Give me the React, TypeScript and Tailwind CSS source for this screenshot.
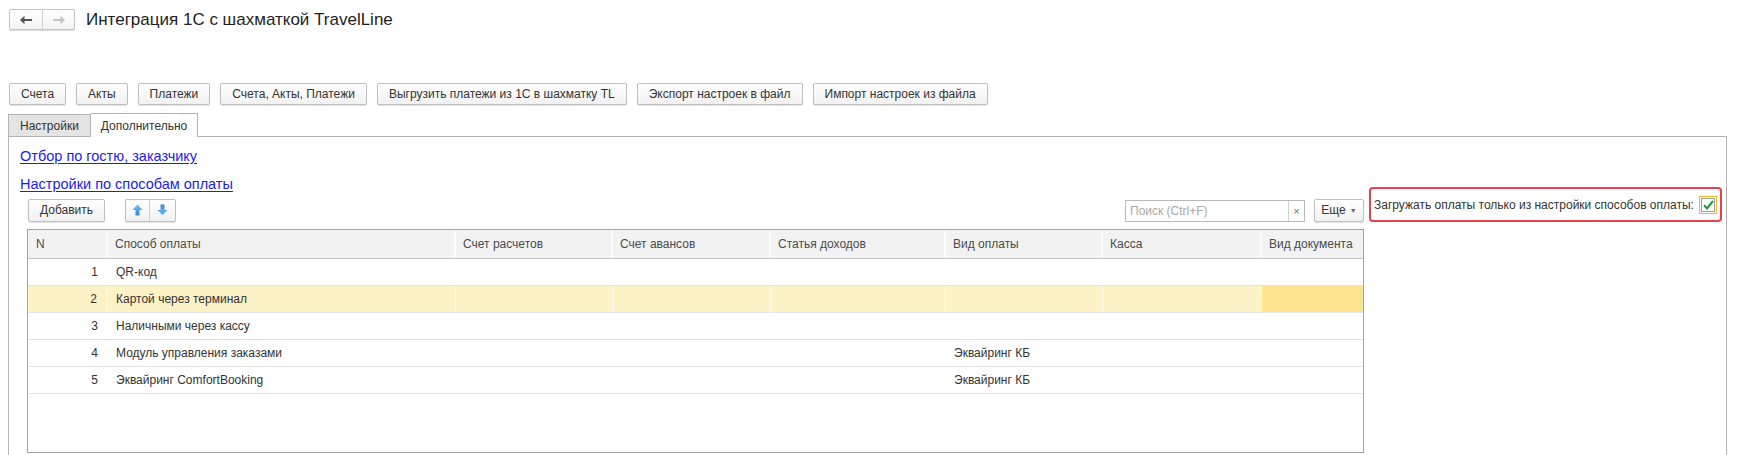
import type { ReactNode } from 'react';

const cols = [
  { title: 'N', w: 'w-[80px]' },
  { title: 'Способ оплаты', w: 'w-[348px]' },
  { title: 'Счет расчетов', w: 'w-[157px]' },
  { title: 'Счет авансов', w: 'w-[158px]' },
  { title: 'Статья доходов', w: 'w-[175px]' },
  { title: 'Вид оплаты', w: 'w-[157px]' },
  { title: 'Касса', w: 'w-[159px]' },
  { title: 'Вид документа', w: 'flex-1' },
];

const rows = [
  { n: 1, name: 'QR-код', vid: '' },
  { n: 2, name: 'Картой через терминал', vid: '' },
  { n: 3, name: 'Наличными через кассу', vid: '' },
  { n: 4, name: 'Модуль управления заказами', vid: 'Эквайринг КБ' },
  { n: 5, name: 'Эквайринг ComfortBooking', vid: 'Эквайринг КБ' },
];

function Btn({ children, className = '' }: { children: ReactNode; className?: string }) {
  return (
    <button
      className={`h-[22px] px-[11px] border border-[#bfbfbf] rounded-[2px] bg-linear-to-b from-white to-[#f1f1f1] text-[12px] leading-none text-[#333] shadow-[0_1px_1px_rgba(0,0,0,0.12)] whitespace-nowrap ${className}`}
    >
      {children}
    </button>
  );
}

function BlockArrow({ up }: { up?: boolean }) {
  return (
    <svg width="11" height="12" viewBox="0 0 11 12" className={up ? '' : 'rotate-180'}>
      <defs>
        <linearGradient id={up ? 'gu' : 'gd'} x1="0" y1="0" x2="0" y2="1">
          <stop offset="0" stopColor="#7cc0f0" />
          <stop offset="1" stopColor="#2f86d2" />
        </linearGradient>
      </defs>
      <polygon points="5.5,0.5 10.5,6 7.5,6 7.5,11.5 3.5,11.5 3.5,6 0.5,6" fill={`url(#${up ? 'gu' : 'gd'})`} />
    </svg>
  );
}

export default function App() {
  return (
    <div className="w-[1740px] h-[455px] overflow-hidden bg-white font-['Liberation_Sans',Arial,sans-serif] text-[#333]">
      {/* title bar */}
      <div className="flex items-center pt-[9px] pl-[9px]">
        <div className="flex h-[21px] border border-[#c6c6c6] rounded-[2px] bg-linear-to-b from-white to-[#f3f3f3] shadow-[0_1px_1px_rgba(0,0,0,0.15)]">
          <div className="w-[33px] flex items-center justify-center border-r border-[#d0d0d0]">
            <svg width="14" height="10" viewBox="0 0 14 10">
              <path d="M13 5H4" stroke="#555" strokeWidth="2" />
              <path d="M5.5 0.8L1 5l4.5 4.2" fill="#555" />
            </svg>
          </div>
          <div className="w-[31px] flex items-center justify-center">
            <svg width="14" height="10" viewBox="0 0 14 10">
              <path d="M1 5h9" stroke="#c4c4c4" strokeWidth="2" />
              <path d="M8.5 0.8L13 5l-4.5 4.2" fill="#c4c4c4" />
            </svg>
          </div>
        </div>
        <div className="ml-[11px] text-[17px] leading-[20px] text-[#1e1e1e]">Интеграция 1С с шахматкой TravelLine</div>
      </div>

      {/* command bar */}
      <div className="flex gap-[10px] pl-[9px] mt-[53px]">
        <Btn>Счета</Btn>
        <Btn>Акты</Btn>
        <Btn>Платежи</Btn>
        <Btn>Счета, Акты, Платежи</Btn>
        <Btn>Выгрузить платежи из 1С в шахматку TL</Btn>
        <Btn>Экспорт настроек в файл</Btn>
        <Btn>Импорт настроек из файла</Btn>
      </div>

      {/* tabs */}
      <div className="flex items-end pl-[8px] mt-[7px] h-[24px]">
        <div className="h-[22px] px-[11px] flex items-center bg-[#e4e4e4] border border-b-0 border-[#b4b4b4] text-[12px] text-[#333]">
          Настройки
        </div>
        <div className="h-[24px] px-[10px] flex items-center bg-white border border-l-0 border-b-0 border-[#b4b4b4] text-[12px] text-[#333] relative top-[1px]">
          Дополнительно
        </div>
      </div>

      {/* panel */}
      <div className="ml-[8px] mr-[13px] border border-[#b4b4b4] h-[330px] pl-[11px]">
        <div className="pt-[10px] text-[14.5px] leading-[18px] text-[#1c1cf0] underline underline-offset-2">
          Отбор по гостю, заказчику
        </div>

        <div className="flex">
          <div className="w-[1344px]">
            <div className="mt-[10px] text-[14.5px] leading-[18px] text-[#1c1cf0] underline underline-offset-2">
              Настройки по способам оплаты
            </div>

            <div className="mt-[5px] h-[24px] flex items-center pl-[8px]">
              <Btn className="h-[23px]">Добавить</Btn>
              <div className="ml-[20px] flex h-[23px] border border-[#bfbfbf] rounded-[2px] bg-linear-to-b from-white to-[#f1f1f1] shadow-[0_1px_1px_rgba(0,0,0,0.12)]">
                <div className="w-[24px] flex items-center justify-center border-r border-[#cfcfcf]">
                  <BlockArrow up />
                </div>
                <div className="w-[25px] flex items-center justify-center">
                  <BlockArrow />
                </div>
              </div>
              <div className="flex-1" />
              <div className="flex h-[22px] w-[180px] border border-[#b8b8b8] bg-white mt-[2px]">
                <div className="flex-1 flex items-center pl-[4px] text-[12px] text-[#a8a8a8]">Поиск (Ctrl+F)</div>
                <div className="w-[16px] border-l border-[#cfcfcf] flex items-center justify-center text-[11px] text-[#777]">×</div>
              </div>
              <Btn className="ml-[9px] h-[23px] w-[50px] px-0 flex items-center justify-center gap-[4px]">
                <span>Еще</span>
                <span className="text-[7px] text-[#666]">▼</span>
              </Btn>
            </div>

            {/* table */}
            <div className="mt-[7px] ml-[7px] w-[1337px] h-[224px] border border-[#a3a3a3] flex flex-col">
              <div className="flex h-[29px] bg-[#f2f2f2] border-b border-[#c4c4c4]">
                {cols.map((c, i) => (
                  <div
                    key={c.title}
                    className={`${c.w} flex items-center text-[12px] text-[#4a4a4a] ${i === 0 ? 'pl-[8px]' : 'pl-[7px]'} ${i < cols.length - 1 ? 'border-r-2 border-[#fbfbfb]' : ''}`}
                  >
                    {c.title}
                  </div>
                ))}
              </div>
              {rows.map((r) => {
                const sel = r.n === 2;
                return (
                  <div key={r.n} className={`flex h-[27px] border-b border-[#e4e4e4] ${sel ? 'bg-[#fdf1c6]' : ''}`}>
                    {cols.map((c, i) => {
                      let content: ReactNode = null;
                      if (i === 0) content = r.n;
                      if (i === 1) content = r.name;
                      if (i === 5) content = r.vid;
                      return (
                        <div
                          key={c.title}
                          className={`${c.w} flex items-center text-[12px] text-[#333] ${i === 0 ? 'justify-end pr-[10px]' : 'pl-[8px]'} ${sel && i < cols.length - 1 ? 'border-r border-[#fffaf0]' : ''} ${sel && i === cols.length - 1 ? 'bg-[#fde58f]' : ''}`}
                        >
                          {content}
                        </div>
                      );
                    })}
                  </div>
                );
              })}
            </div>
          </div>

          {/* option */}
          <div className="ml-[5px] mt-[22px]">
            <div className="w-[353px] h-[35px] border-2 border-[#e8424e] rounded-[4px] flex items-center justify-between pl-[3px] pr-[3px]">
              <span className="text-[12px] text-[#333] whitespace-nowrap">Загружать оплаты только из настройки способов оплаты:</span>
              <div className="w-[18px] h-[18px] border-[1.5px] border-[#f1b52c] p-[1px]">
                <div className="w-full h-full border border-[#9d9d9d] bg-white flex items-center justify-center">
                  <svg width="11" height="10" viewBox="0 0 11 10">
                    <path d="M1 5.2l3 3.2L10 1" stroke="#1f9a3c" strokeWidth="2" fill="none" />
                  </svg>
                </div>
              </div>
            </div>
          </div>
        </div>
      </div>
    </div>
  );
}
